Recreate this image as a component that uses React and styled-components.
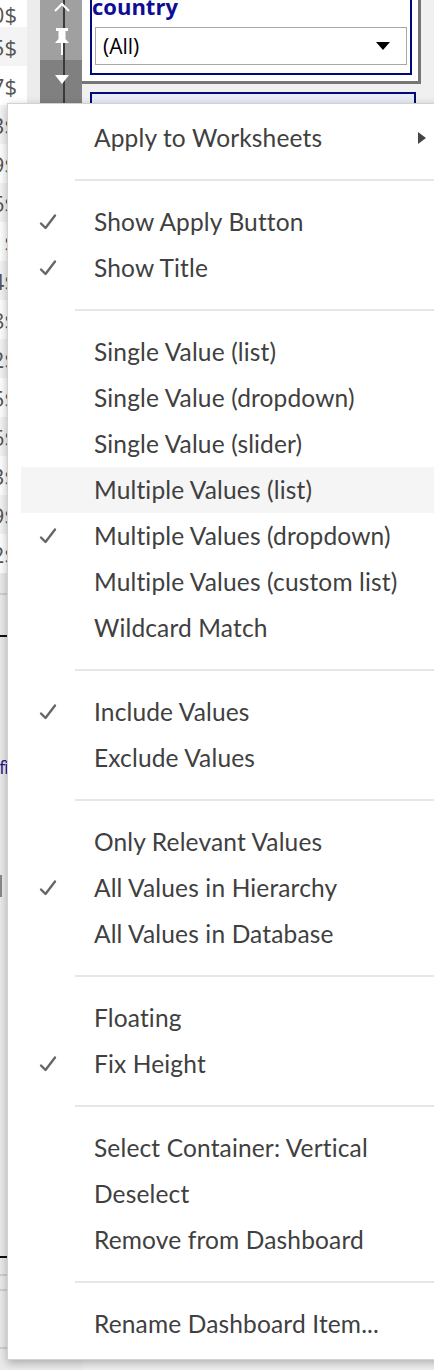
import styled, { createGlobalStyle } from 'styled-components';

const GlobalStyle = createGlobalStyle`
  html, body { margin: 0; padding: 0; }
  body {
    width: 434px;
    height: 1370px;
    overflow: hidden;
    background: #fff;
    font-family: Lato, "Open Sans", sans-serif;
  }
`;

const tableValues = ['0$', '5$', '7$', '3$', '9$', '6$', '1$', '4$', '8$', '2$', '5$', '6$', '3$', '9$', '2$'];

const menuGroups = [
  [{ label: 'Apply to Worksheets', submenu: true }],
  [
    { label: 'Show Apply Button', checked: true },
    { label: 'Show Title', checked: true },
  ],
  [
    { label: 'Single Value (list)' },
    { label: 'Single Value (dropdown)' },
    { label: 'Single Value (slider)' },
    { label: 'Multiple Values (list)', hover: true },
    { label: 'Multiple Values (dropdown)', checked: true },
    { label: 'Multiple Values (custom list)' },
    { label: 'Wildcard Match' },
  ],
  [
    { label: 'Include Values', checked: true },
    { label: 'Exclude Values' },
  ],
  [
    { label: 'Only Relevant Values' },
    { label: 'All Values in Hierarchy', checked: true },
    { label: 'All Values in Database' },
  ],
  [
    { label: 'Floating' },
    { label: 'Fix Height', checked: true },
  ],
  [
    { label: 'Select Container: Vertical' },
    { label: 'Deselect' },
    { label: 'Remove from Dashboard' },
  ],
  [{ label: 'Rename Dashboard Item...' }],
];

const Check = () => (
  <svg width="18" height="18" viewBox="0 0 18 18">
    <path d="M2 10.5 L6.5 15 L16 2.5" fill="none" stroke="#666" strokeWidth="2.4" strokeLinecap="round" strokeLinejoin="round" />
  </svg>
);

const Pin = () => (
  <svg width="16" height="27" viewBox="0 0 16 27">
    <rect x="2" y="0" width="12" height="3" fill="#fff" />
    <rect x="4.5" y="3" width="7" height="8" fill="#fff" />
    <path d="M4.5 11 H11.5 L15 15 H1 Z" fill="#fff" />
    <rect x="7" y="15" width="2" height="12" fill="#fff" />
  </svg>
);

const App = () => (
  <>
    <GlobalStyle />
    <Screen>
      <TableColumn>
        {tableValues.map((v, i) => (
          <Cell key={i} $shade={i % 2 === 1}>{v}</Cell>
        ))}
        <SheetRule $top={20} $light />
        <SheetRule $top={40} />
        <SheetLabel $top={118}>fi</SheetLabel>
        <SheetTick $top={96} />
        <SheetRule $top={359} />
        <SheetRule $top={16} $light />
        <SheetRule $top={13} $light />
        <SheetRule $top={56} $light />
      </TableColumn>
      <Gutter />
      <Toolbar>
        <ToolTop>
          <UpChevron>
            <svg width="16" height="10" viewBox="0 0 16 10">
              <path d="M1 9 L8 2 L15 9" fill="none" stroke="#fff" strokeWidth="2" />
            </svg>
          </UpChevron>
          <Pin />
        </ToolTop>
        <ToolBottom>
          <svg width="14" height="9" viewBox="0 0 14 9">
            <path d="M0 0 H14 L7 9 Z" fill="#fff" />
          </svg>
        </ToolBottom>
        <ToolRest />
      </Toolbar>
      <FilterArea>
        <FilterCard>
          <NavyBox>
            <FilterTitle>country</FilterTitle>
            <Select>
              <span>(All)</span>
              <svg width="14" height="8" viewBox="0 0 14 8">
                <path d="M0 0 H14 L7 8 Z" fill="#000" />
              </svg>
            </Select>
          </NavyBox>
        </FilterCard>
        <NextCard />
      </FilterArea>

      <Menu>
        {menuGroups.map((group, gi) => (
          <Group key={gi}>
            {gi > 0 && <Separator />}
            {group.map((item) => (
              <Item key={item.label} $hover={item.hover}>
                <CheckSlot>{item.checked && <Check />}</CheckSlot>
                <Label>{item.label}</Label>
                {item.submenu && <SubArrow />}
              </Item>
            ))}
          </Group>
        ))}
      </Menu>
    </Screen>
  </>
);

const Screen = styled.div`
  position: relative;
  display: flex;
  width: 434px;
  height: 1370px;
  overflow: hidden;
  background: #f0f0f0;
`;

const TableColumn = styled.div`
  width: 27px;
  flex-shrink: 0;
  display: flex;
  flex-direction: column;
  background: #ebebeb;
`;

const Cell = styled.div`
  height: 39px;
  flex-shrink: 0;
  display: flex;
  align-items: center;
  justify-content: flex-end;
  padding-right: 10px;
  overflow: hidden;
  white-space: nowrap;
  font-family: "Open Sans", sans-serif;
  font-size: 22px;
  color: #555;
  background: ${(p) => (p.$shade ? '#f4f4f4' : '#fff')};
  &:first-child { height: 27px; }
`;

const SheetRule = styled.div`
  flex-shrink: 0;
  margin-top: ${(p) => p.$top}px;
  height: 2px;
  background: ${(p) => (p.$light ? '#d0d0d0' : '#111')};
`;

const SheetLabel = styled.div`
  flex-shrink: 0;
  margin: ${(p) => p.$top}px 0 0 -1px;
  font-family: "Open Sans", sans-serif;
  font-size: 19px;
  letter-spacing: -1.5px;
  color: #1d1d8f;
  line-height: 24px;
`;

const SheetTick = styled.div`
  flex-shrink: 0;
  margin-top: ${(p) => p.$top}px;
  width: 2px;
  height: 22px;
  background: #888;
`;

const Gutter = styled.div`
  width: 13px;
  flex-shrink: 0;
  background: #ececec;
`;

const Toolbar = styled.div`
  width: 42px;
  flex-shrink: 0;
  display: flex;
  flex-direction: column;
`;

const toolLine = 'linear-gradient(to right, transparent 23px, #3a3a3a 23px, #3a3a3a 25px, transparent 25px)';

const ToolTop = styled.div`
  height: 60px;
  display: flex;
  flex-direction: column;
  align-items: center;
  padding-left: 2px;
  background: ${toolLine}, #a0a0a0;
`;

const UpChevron = styled.div`
  margin-top: -4px;
  height: 32px;
`;

const ToolBottom = styled.div`
  height: 43px;
  display: flex;
  align-items: center;
  justify-content: center;
  padding-left: 2px;
  padding-bottom: 4px;
  box-sizing: border-box;
  background: ${toolLine}, #808080;
`;

const ToolRest = styled.div`
  flex: 1;
  background: #ececec;
`;

const FilterArea = styled.div`
  flex: 1;
  display: flex;
  flex-direction: column;
`;

const FilterCard = styled.div`
  width: 339px;
  box-sizing: border-box;
  background: #fff;
  border-right: 3px solid #767676;
  border-bottom: 3px solid #767676;
  padding: 0 6px 6px 8px;
`;

const NavyBox = styled.div`
  height: 83px;
  box-sizing: border-box;
  border: 2px solid #000a78;
  border-top: none;
`;

const FilterTitle = styled.div`
  margin-top: -8px;
  font-family: "Open Sans", sans-serif;
  font-weight: 700;
  font-size: 22px;
  line-height: 28px;
  color: #0d0d96;
`;

const Select = styled.div`
  margin: 7px 3px 0;
  height: 38px;
  box-sizing: border-box;
  border: 1.5px solid #a8a8a8;
  display: flex;
  align-items: center;
  justify-content: space-between;
  padding: 0 16px 0 7px;
  font-family: "Open Sans", sans-serif;
  font-size: 21px;
  color: #000;
`;

const NextCard = styled.div`
  margin: 8px 0 0 8px;
  width: 322px;
  height: 40px;
  border: 2px solid #000a78;
  border-bottom: none;
  background: #e8ecf6;
`;

const Menu = styled.div`
  position: absolute;
  left: 7px;
  top: 103px;
  width: 460px;
  box-sizing: border-box;
  padding: 11px 0 12px 13px;
  background: #fff;
  border: 1px solid #d2d2d2;
  box-shadow: 0 3px 9px rgba(0, 0, 0, 0.28);
`;

const Group = styled.div`
  display: flex;
  flex-direction: column;
`;

const Separator = styled.div`
  height: 2px;
  margin: 18px 0 18px 54px;
  background: #e6e6e6;
`;

const Item = styled.div`
  height: 46px;
  display: flex;
  align-items: center;
  padding-right: 40px;
  background: ${(p) => (p.$hover ? '#f5f5f5' : 'transparent')};
`;

const CheckSlot = styled.div`
  width: 74px;
  flex-shrink: 0;
  display: flex;
  align-items: center;
  padding-left: 18px;
  box-sizing: border-box;
`;

const Label = styled.span`
  flex: 1;
  margin-left: -1px;
  font-size: 24.5px;
  letter-spacing: 0.15px;
  line-height: 30px;
  color: #404040;
  white-space: nowrap;
`;

const SubArrow = styled.span`
  width: 0;
  height: 0;
  border-top: 6.5px solid transparent;
  border-bottom: 6.5px solid transparent;
  border-left: 8px solid #444;
`;

export default App;
